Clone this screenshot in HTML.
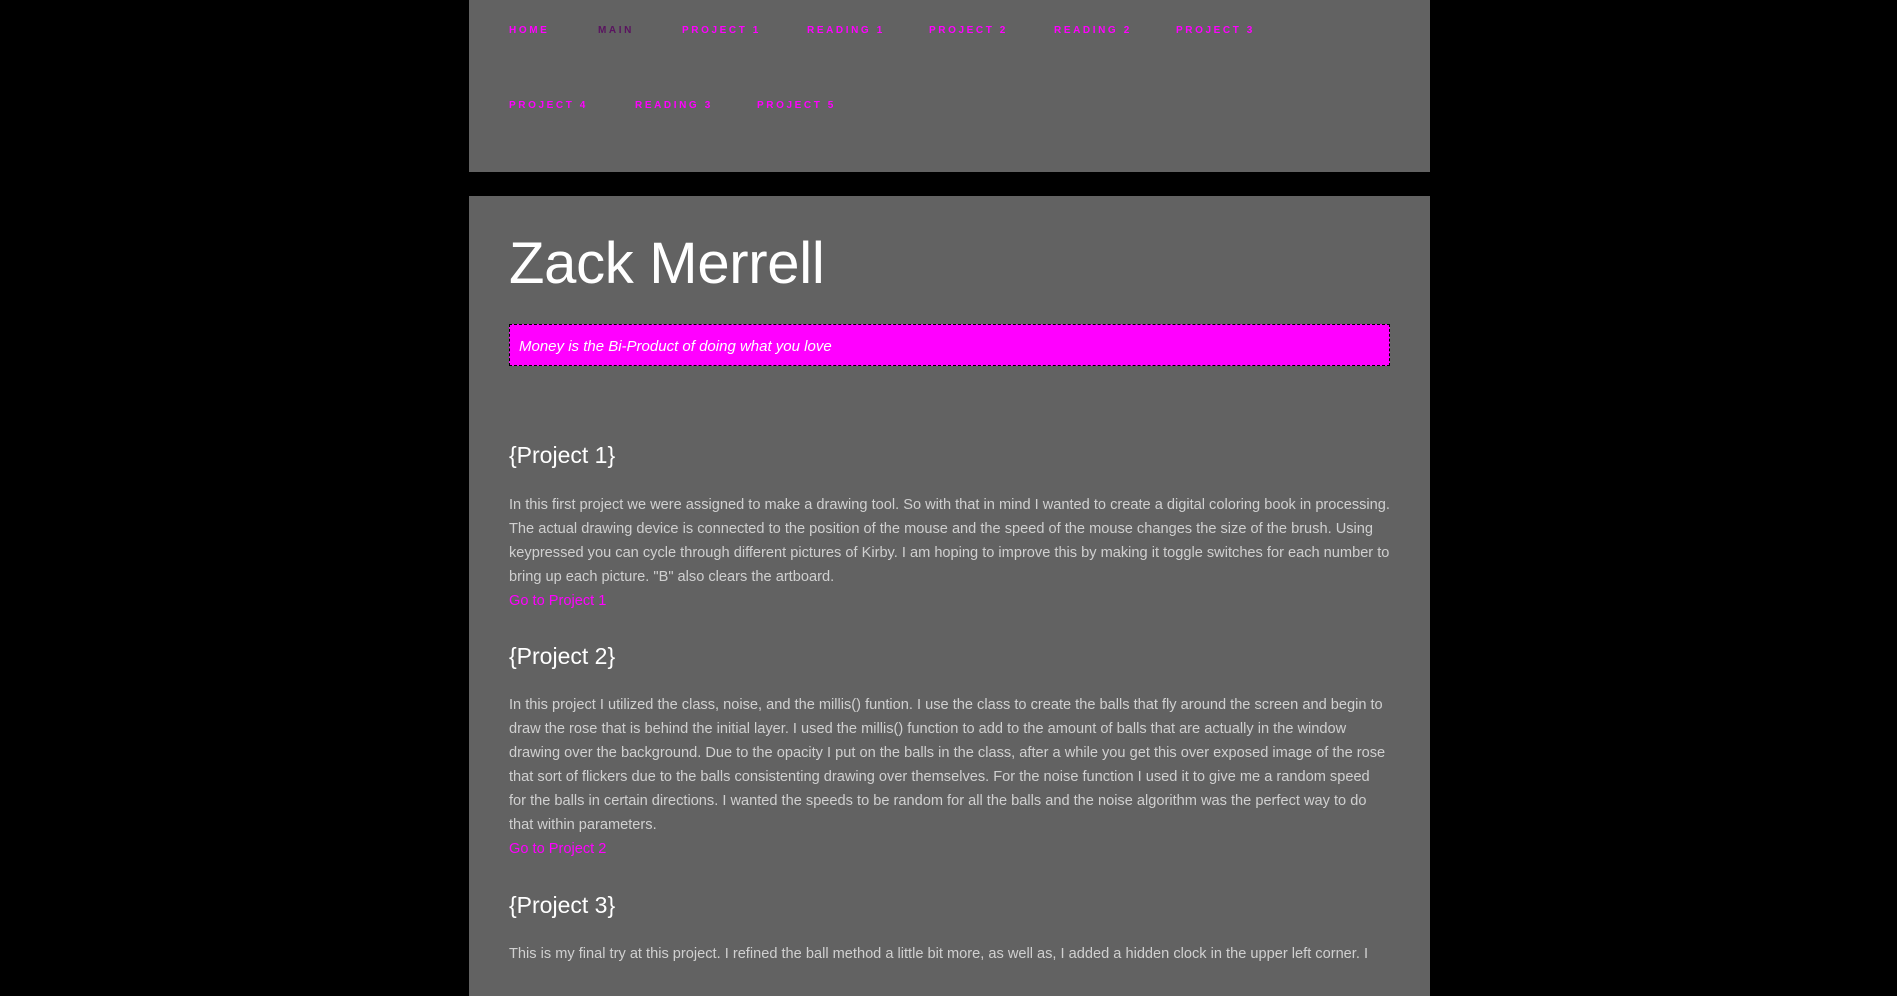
<!DOCTYPE html>
<html><head><meta charset="utf-8"><style>
*{margin:0;padding:0;box-sizing:border-box}
html,body{width:1897px;height:961px;overflow:hidden;background:#000;font-family:"Liberation Sans",Arial,sans-serif}
.nav{position:absolute;left:469px;top:0;width:961px;height:172px;background:#626262}
.nav a{position:absolute;font-size:10px;font-weight:bold;letter-spacing:2.6px;color:#ff00ff;text-decoration:none;line-height:12px}
.nav a.cur{color:#5a1360}
.main{position:absolute;left:469px;top:196px;width:961px;height:800px;background:#626262}
.abs{position:absolute;left:40px;white-space:nowrap}
h1{font-weight:normal;font-size:58px;line-height:70px;color:#fff;letter-spacing:-0.3px}
.quote{left:40px;width:881px;height:42px;background:#ff00ff;border:1px dashed #000;color:#fff;font-style:italic;font-size:15px;line-height:43px;padding-left:9px}
h2{font-weight:normal;font-size:23px;line-height:30px;color:#fff}
p{font-size:14.6px;line-height:24px;color:#d0d0d0}
p a{color:#ff00ff;text-decoration:none;font-weight:normal}
</style></head><body>
<div class="nav">
<a style="left:40px;top:25px">HOME</a>
<a class="cur" style="left:129px;top:25px">MAIN</a>
<a style="left:213px;top:25px">PROJECT 1</a>
<a style="left:338px;top:25px">READING 1</a>
<a style="left:460px;top:25px">PROJECT 2</a>
<a style="left:585px;top:25px">READING 2</a>
<a style="left:707px;top:25px">PROJECT 3</a>
<a style="left:40px;top:100px">PROJECT 4</a>
<a style="left:166px;top:100px">READING 3</a>
<a style="left:288px;top:100px">PROJECT 5</a>
</div>
<div class="main">
<h1 class="abs" style="top:33px">Zack Merrell</h1>
<div class="abs quote" style="top:128px">Money is the Bi-Product of doing what you love</div>
<h2 class="abs" style="top:244px">{Project 1}</h2>
<p class="abs" style="top:297px">In this first project we were assigned to make a drawing tool. So with that in mind I wanted to create a digital coloring book in processing.<br>The actual drawing device is connected to the position of the mouse and the speed of the mouse changes the size of the brush. Using<br>keypressed you can cycle through different pictures of Kirby. I am hoping to improve this by making it toggle switches for each number to<br>bring up each picture. "B" also clears the artboard.<br><a>Go to Project 1</a></p>
<h2 class="abs" style="top:445px">{Project 2}</h2>
<p class="abs" style="top:497px">In this project I utilized the class, noise, and the millis() funtion. I use the class to create the balls that fly around the screen and begin to<br>draw the rose that is behind the initial layer. I used the millis() function to add to the amount of balls that are actually in the window<br>drawing over the background. Due to the opacity I put on the balls in the class, after a while you get this over exposed image of the rose<br>that sort of flickers due to the balls consistenting drawing over themselves. For the noise function I used it to give me a random speed<br>for the balls in certain directions. I wanted the speeds to be random for all the balls and the noise algorithm was the perfect way to do<br>that within parameters.<br><a>Go to Project 2</a></p>
<h2 class="abs" style="top:694px">{Project 3}</h2>
<p class="abs" style="top:746px">This is my final try at this project. I refined the ball method a little bit more, as well as, I added a hidden clock in the upper left corner. I</p>
</div>
</body></html>
